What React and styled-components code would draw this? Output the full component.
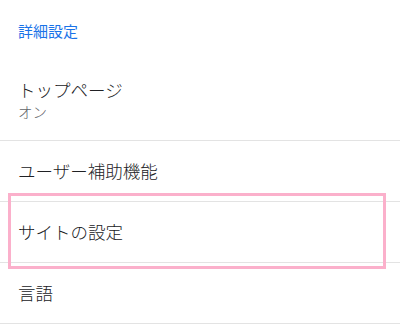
import styled, { createGlobalStyle } from "styled-components";

const Global = createGlobalStyle`
  body {
    margin: 0;
    background: #ffffff;
    font-family: "Noto Sans CJK JP", "Noto Sans", sans-serif;
  }
`;

const Page = styled.div`
  width: 400px;
  display: flex;
  flex-direction: column;
`;

const SectionTitle = styled.div`
  height: 60px;
  display: flex;
  align-items: center;
  padding-left: 18px;
  font-size: 15px;
  color: #1a73e8;
`;

const Row = styled.div`
  position: relative;
  min-height: ${(p) => (p.$tall ? "80px" : "60px")};
  display: flex;
  flex-direction: column;
  justify-content: center;
  padding-left: 18px;
  border-bottom: 1px solid #e3e3e3;

  ${(p) =>
    p.$highlight &&
    `
    &::after {
      content: "";
      position: absolute;
      left: 8px;
      right: 14px;
      top: -9px;
      bottom: -7px;
      border: 3px solid #fbb0cb;
      pointer-events: none;
    }
  `}
`;

const Label = styled.div`
  font-size: 17.5px;
  font-weight: 300;
  line-height: 22px;
  color: #202124;
`;

const Sub = styled.div`
  font-size: 14.5px;
  font-weight: 300;
  line-height: 20px;
  margin-top: 1px;
  color: #5f6368;
`;

const items = [
  { label: "トップページ", sub: "オン" },
  { label: "ユーザー補助機能" },
  { label: "サイトの設定", highlight: true },
  { label: "言語" },
];

export default function App() {
  return (
    <Page>
      <Global />
      <SectionTitle>詳細設定</SectionTitle>
      {items.map((item) => (
        <Row key={item.label} $tall={!!item.sub} $highlight={item.highlight}>
          <Label>{item.label}</Label>
          {item.sub && <Sub>{item.sub}</Sub>}
        </Row>
      ))}
    </Page>
  );
}
